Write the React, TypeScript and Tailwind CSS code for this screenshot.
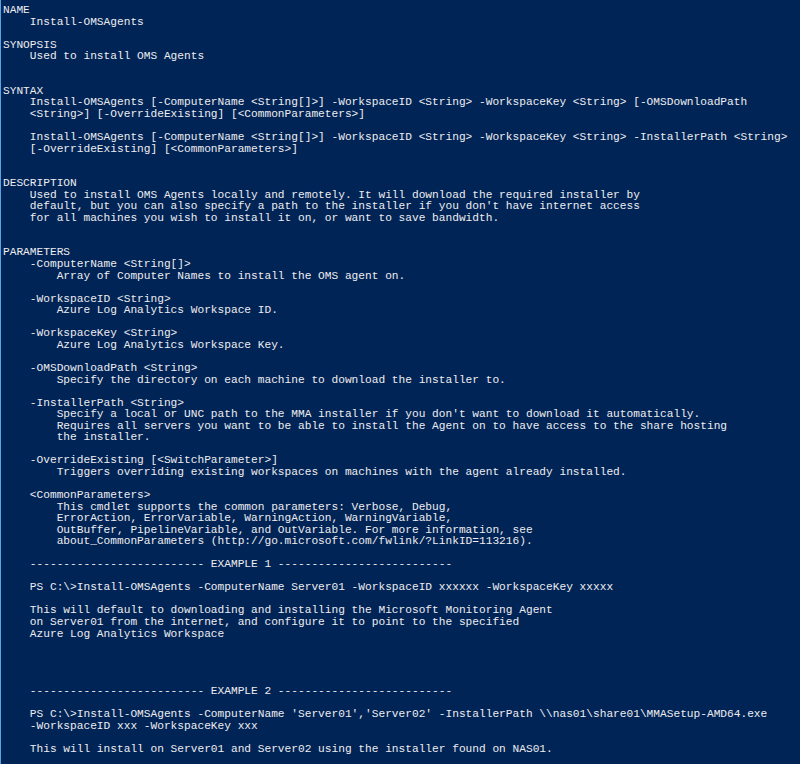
const lines: string[] = [
  "NAME",
  "    Install-OMSAgents",
  "",
  "SYNOPSIS",
  "    Used to install OMS Agents",
  "",
  "",
  "SYNTAX",
  "    Install-OMSAgents [-ComputerName <String[]>] -WorkspaceID <String> -WorkspaceKey <String> [-OMSDownloadPath",
  "    <String>] [-OverrideExisting] [<CommonParameters>]",
  "",
  "    Install-OMSAgents [-ComputerName <String[]>] -WorkspaceID <String> -WorkspaceKey <String> -InstallerPath <String>",
  "    [-OverrideExisting] [<CommonParameters>]",
  "",
  "",
  "DESCRIPTION",
  "    Used to install OMS Agents locally and remotely. It will download the required installer by",
  "    default, but you can also specify a path to the installer if you don't have internet access",
  "    for all machines you wish to install it on, or want to save bandwidth.",
  "",
  "",
  "PARAMETERS",
  "    -ComputerName <String[]>",
  "        Array of Computer Names to install the OMS agent on.",
  "",
  "    -WorkspaceID <String>",
  "        Azure Log Analytics Workspace ID.",
  "",
  "    -WorkspaceKey <String>",
  "        Azure Log Analytics Workspace Key.",
  "",
  "    -OMSDownloadPath <String>",
  "        Specify the directory on each machine to download the installer to.",
  "",
  "    -InstallerPath <String>",
  "        Specify a local or UNC path to the MMA installer if you don't want to download it automatically.",
  "        Requires all servers you want to be able to install the Agent on to have access to the share hosting",
  "        the installer.",
  "",
  "    -OverrideExisting [<SwitchParameter>]",
  "        Triggers overriding existing workspaces on machines with the agent already installed.",
  "",
  "    <CommonParameters>",
  "        This cmdlet supports the common parameters: Verbose, Debug,",
  "        ErrorAction, ErrorVariable, WarningAction, WarningVariable,",
  "        OutBuffer, PipelineVariable, and OutVariable. For more information, see",
  "        about_CommonParameters (http://go.microsoft.com/fwlink/?LinkID=113216).",
  "",
  "    -------------------------- EXAMPLE 1 --------------------------",
  "",
  "    PS C:\\>Install-OMSAgents -ComputerName Server01 -WorkspaceID xxxxxx -WorkspaceKey xxxxx",
  "",
  "    This will default to downloading and installing the Microsoft Monitoring Agent",
  "    on Server01 from the internet, and configure it to point to the specified",
  "    Azure Log Analytics Workspace",
  "",
  "",
  "",
  "",
  "    -------------------------- EXAMPLE 2 --------------------------",
  "",
  "    PS C:\\>Install-OMSAgents -ComputerName 'Server01','Server02' -InstallerPath \\\\nas01\\share01\\MMASetup-AMD64.exe",
  "    -WorkspaceID xxx -WorkspaceKey xxx",
  "",
  "    This will install on Server01 and Server02 using the installer found on NAS01.",
];

export default function App() {
  return (
    <div className="h-[764px] w-[800px] overflow-hidden bg-[#012456] border-l border-[#5ba3e0]">
      <pre className="pl-[2px] pt-[5px] font-['Liberation_Mono',monospace] text-[11.18px] leading-[11.54px] text-[#eeedf0] whitespace-pre">
        {lines.join("\n")}
      </pre>
    </div>
  );
}
